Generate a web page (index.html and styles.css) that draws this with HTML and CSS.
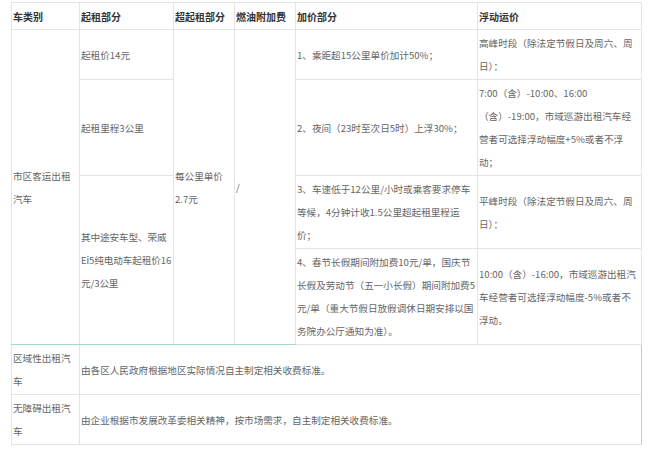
FILE: index.html
```html
<!DOCTYPE html>
<html lang="zh-CN">
<head>
<meta charset="utf-8">
<title>出租汽车运价</title>
<link rel="stylesheet" href="styles.css">
</head>
<body>
<div class="wrap">
<table class="fare">
  <colgroup>
    <col class="c1"><col class="c2"><col class="c3"><col class="c4"><col class="c5"><col class="c6">
  </colgroup>
  <thead>
    <tr>
      <th>车类别</th>
      <th>起租部分</th>
      <th>超起租部分</th>
      <th>燃油附加费</th>
      <th>加价部分</th>
      <th>浮动运价</th>
    </tr>
  </thead>
  <tbody>
    <tr class="r1">
      <td rowspan="4" class="green-b">市区客运出租汽车</td>
      <td>起租价14元</td>
      <td rowspan="4" class="green-b">每公里单价2.7元</td>
      <td rowspan="4" class="green-b">/</td>
      <td>1、乘距超15公里单价加计50%；</td>
      <td class="float">高峰时段（除法定节假日及周六、周日）：</td>
    </tr>
    <tr class="r2">
      <td>起租里程3公里</td>
      <td>2、夜间（23时至次日5时）上浮30%；</td>
      <td class="float">7:00（含）-10:00、16:00（含）-19:00，市域巡游出租汽车经营者可选择浮动幅度+5%或者不浮动；</td>
    </tr>
    <tr class="r3">
      <td rowspan="2" class="green-b tight">其中途安车型、荣威Ei5纯电动车起租价16元/3公里</td>
      <td>3、车速低于12公里/小时或乘客要求停车等候，4分钟计收1.5公里超起租里程运价；</td>
      <td class="float">平峰时段（除法定节假日及周六、周日）：</td>
    </tr>
    <tr class="r4">
      <td>4、春节长假期间附加费10元/单，国庆节长假及劳动节（五一小长假）期间附加费5元/单（重大节假日放假调休日期安排以国务院办公厅通知为准）。</td>
      <td class="float">10:00（含）-16:00，市域巡游出租汽车经营者可选择浮动幅度-5%或者不浮动。</td>
    </tr>
    <tr class="r5">
      <td>区域性出租汽车</td>
      <td colspan="5" class="green-r">由各区人民政府根据地区实际情况自主制定相关收费标准。</td>
    </tr>
    <tr class="r6">
      <td>无障碍出租汽车</td>
      <td colspan="5" class="green-r">由企业根据市发展改革委相关精神，按市场需求，自主制定相关收费标准。</td>
    </tr>
  </tbody>
</table>
</div>
</body>
</html>
```

FILE: styles.css
```css
html, body {
  margin: 0;
  padding: 0;
  background: #ffffff;
}

.wrap {
  padding: 2px 0 0 11px;
}

.fare {
  border-collapse: collapse;
  table-layout: fixed;
  width: 630px;
  font-family: "Noto Sans CJK SC", "Noto Sans", sans-serif;
  font-size: 9.6px;
  line-height: 23px;
  color: #666666;
}

.c1 { width: 68px; }
.c2 { width: 94px; }
.c3 { width: 61px; }
.c4 { width: 61px; }
.c5 { width: 182px; }
.c6 { width: 164px; }

.fare th,
.fare td {
  border: 1px solid #e4e4e4;
  padding: 2px 1px 1px 1px;
  vertical-align: middle;
  text-align: left;
}

.fare th {
  color: #333333;
  font-weight: bold;
  font-size: 10px;
}

.fare td.tight {
  padding-right: 0;
  letter-spacing: -0.1px;
}

.fare td.float {
  padding-right: 3px;
}

.fare td.green-b {
  border-bottom-color: #a6dcc2;
}

.fare td.green-r {
  border-right-color: #a6dcc2;
}
```
